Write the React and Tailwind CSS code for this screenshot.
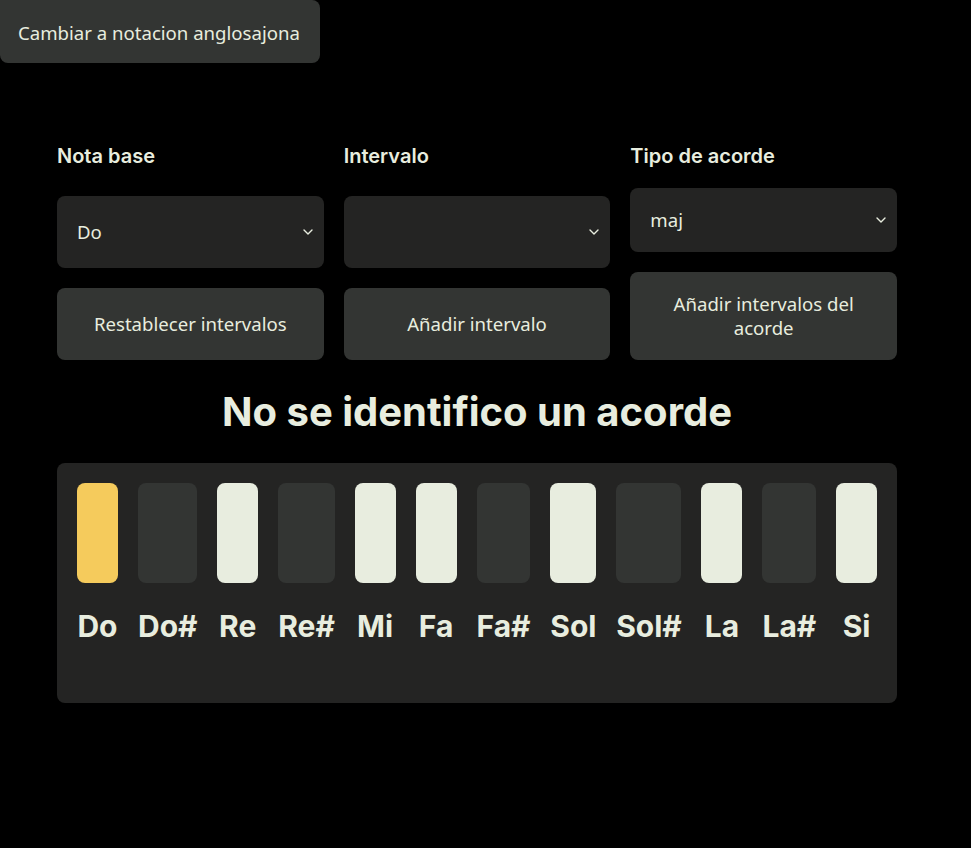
import React, { useState } from 'react';

const NOTES = [
    { name: 'Do', state: 'root' },
    { name: 'Do#', state: 'black' },
    { name: 'Re', state: 'white' },
    { name: 'Re#', state: 'black' },
    { name: 'Mi', state: 'white' },
    { name: 'Fa', state: 'white' },
    { name: 'Fa#', state: 'black' },
    { name: 'Sol', state: 'white' },
    { name: 'Sol#', state: 'black' },
    { name: 'La', state: 'white' },
    { name: 'La#', state: 'black' },
    { name: 'Si', state: 'white' },
];

const keyColor = {
    root: 'bg-[#f5cb5c]',
    white: 'bg-[#e8eddf]',
    black: 'bg-[#333533]',
};

const Chevron = () => (
    <svg width="10" height="6" viewBox="0 0 10 6" fill="none" className="shrink-0">
        <path d="M1 1l4 4 4-4" stroke="#e8eddf" strokeWidth="1.4" strokeLinecap="round" strokeLinejoin="round" />
    </svg>
);

const FakeSelect = ({ value, height }) => (
    <div className={`flex items-center justify-between rounded-lg bg-[#242423] pl-5 pr-[11px] ${height}`}>
        <span>{value}</span>
        <Chevron />
    </div>
);

const ActionButton = ({ children, height }) => (
    <button className={`flex w-full items-center justify-center rounded-lg bg-[#333533] px-5 text-center leading-6 ${height}`}>
        {children}
    </button>
);

const App = () => {
    const [anglo, setAnglo] = useState(false);

    return (
        <div className="min-h-[848px] bg-black text-[#e8eddf] font-['Noto_Sans',sans-serif] text-[18.6px]">
            <button
                onClick={() => setAnglo(!anglo)}
                className="h-[63px] w-[320px] rounded-b-lg rounded-tr-lg bg-[#333533] px-[18px] pt-[2px] text-left"
            >
                Cambiar a notacion anglosajona
            </button>

            <div className="mx-[57px] mt-[79px] w-[840px]">
                <div className="grid grid-cols-3 gap-x-5">
                    <div className="flex flex-col justify-between gap-[18px]">
                        <h3 className="font-['Inter',sans-serif] text-[20px] font-semibold leading-7">Nota base</h3>
                        <div className="flex flex-col gap-5">
                            <FakeSelect value="Do" height="h-[72px]" />
                            <ActionButton height="h-[72px]">Restablecer intervalos</ActionButton>
                        </div>
                    </div>
                    <div className="flex flex-col justify-between gap-[18px]">
                        <h3 className="font-['Inter',sans-serif] text-[20px] font-semibold leading-7">Intervalo</h3>
                        <div className="flex flex-col gap-5">
                            <FakeSelect value="" height="h-[72px]" />
                            <ActionButton height="h-[72px]">Añadir intervalo</ActionButton>
                        </div>
                    </div>
                    <div className="flex flex-col justify-between gap-[18px]">
                        <h3 className="font-['Inter',sans-serif] text-[20px] font-semibold leading-7">Tipo de acorde</h3>
                        <div className="flex flex-col gap-5">
                            <FakeSelect value="maj" height="h-[64px]" />
                            <ActionButton height="h-[88px]">Añadir intervalos del<br />acorde</ActionButton>
                        </div>
                    </div>
                </div>

                <h1 className="mt-[28px] mb-[27px] text-center font-['Inter',sans-serif] text-[40px] font-bold leading-[48px]">
                    No se identifico un acorde
                </h1>

                <div className="h-[240px] rounded-lg bg-[#242423] p-5">
                    <div className="flex gap-5">
                        {NOTES.map(note => (
                            <div key={note.name} className="flex min-w-[41px] flex-col items-stretch">
                                <div className={`h-[100px] rounded-lg ${keyColor[note.state]}`} />
                                <span className="mt-[25px] text-center font-['Inter',sans-serif] text-[30px] font-bold leading-9">
                                    {note.name}
                                </span>
                            </div>
                        ))}
                    </div>
                </div>
            </div>
        </div>
    );
};

export default App;
